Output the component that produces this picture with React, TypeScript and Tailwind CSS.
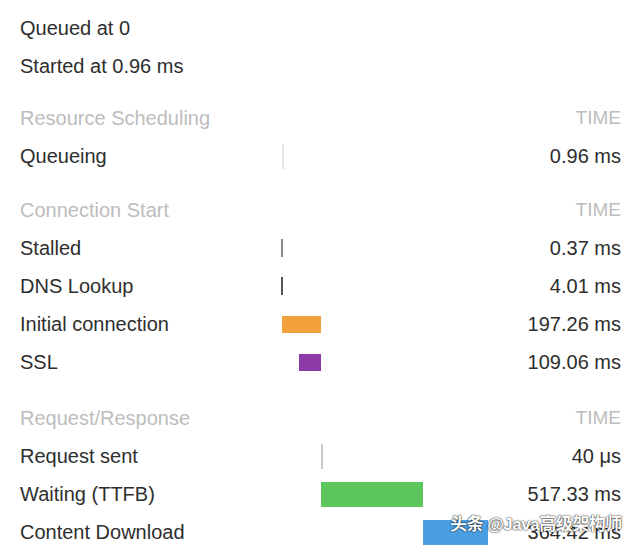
import React from 'react';

type Bar = { left: number; width: number; height: number; color: string };
type Row = { label: string; value: string; bar?: Bar };
type Section = { title: string; mt: string; rows: Row[] };

// bar offsets are px from the start of the timeline track
const sections: Section[] = [
  {
    title: 'Resource Scheduling',
    mt: 'mt-[14px]',
    rows: [{ label: 'Queueing', value: '0.96 ms', bar: { left: 2, width: 2, height: 25, color: '#e2e2e2' } }],
  },
  {
    title: 'Connection Start',
    mt: 'mt-[16px]',
    rows: [
      { label: 'Stalled', value: '0.37 ms', bar: { left: 1, width: 1.5, height: 18, color: '#8a8a8a' } },
      { label: 'DNS Lookup', value: '4.01 ms', bar: { left: 1, width: 2, height: 18, color: '#555' } },
      { label: 'Initial connection', value: '197.26 ms', bar: { left: 2, width: 39, height: 17, color: '#f2a13c' } },
      { label: 'SSL', value: '109.06 ms', bar: { left: 19, width: 22, height: 17, color: '#8b3aa8' } },
    ],
  },
  {
    title: 'Request/Response',
    mt: 'mt-[18px]',
    rows: [
      { label: 'Request sent', value: '40 μs', bar: { left: 41, width: 1.5, height: 25, color: '#c8c8c8' } },
      { label: 'Waiting (TTFB)', value: '517.33 ms', bar: { left: 41, width: 102, height: 25, color: '#5cc65c' } },
      { label: 'Content Download', value: '364.42 ms', bar: { left: 143, width: 65, height: 25, color: '#4a9fe3' } },
    ],
  },
];

function TimingRow({ row }: { row: Row }) {
  return (
    <div className="grid grid-cols-[260px_1fr_auto] items-center h-[38px]">
      <span className="text-[#2e2e2e]">{row.label}</span>
      <div className="relative h-full flex items-center">
        {row.bar && (
          <div
            className="absolute"
            style={{ left: row.bar.left, width: row.bar.width, height: row.bar.height, background: row.bar.color }}
          />
        )}
      </div>
      <span className="text-[#2e2e2e] text-right">{row.value}</span>
    </div>
  );
}

export default function App() {
  return (
    <div
      className="relative w-[627px] h-[550px] bg-white overflow-hidden px-5 pr-[6px] pt-[9px] text-[20px]"
      style={{ fontFamily: '"Liberation Sans", Arial, sans-serif' }}
    >
      <div className="h-[38px] flex items-center text-[#2e2e2e]">Queued at 0</div>
      <div className="h-[38px] flex items-center text-[#2e2e2e]">Started at 0.96 ms</div>

      {sections.map((s) => (
        <div key={s.title} className={s.mt}>
          <div className="flex items-center justify-between h-[38px] text-[#bdbdbd]">
            <span>{s.title}</span>
            <span className="text-[19px]">TIME</span>
          </div>
          {s.rows.map((r) => (
            <TimingRow key={r.label} row={r} />
          ))}
        </div>
      ))}

      {/* watermark over the last row */}
      <div
        className="absolute left-[450px] top-[512px] text-[17px] tracking-[-0.5px] text-white font-semibold whitespace-nowrap [text-shadow:0_0_2px_rgba(0,0,0,0.8),0_0_1px_rgba(0,0,0,0.8)]"
        style={{ fontFamily: '"Liberation Sans", "Noto Sans CJK SC", sans-serif' }}
      >
        <span className="font-bold">头条</span> <span>@Java高级架构师</span>
      </div>
    </div>
  );
}
